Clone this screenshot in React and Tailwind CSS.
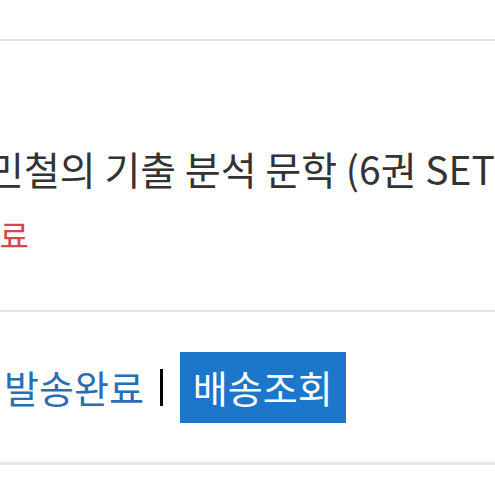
import React from 'react';

const FONT = { fontFamily: '"Noto Sans CJK KR", "Noto Sans", sans-serif' };

function OrderItem() {
  return (
    <div className="flex flex-col">
      <div className="mt-[108px] whitespace-nowrap -ml-[12px] text-[39px] leading-none text-[#333333]">
        민철의 기출 분석 문학 (6권 SET)
      </div>
      <div className="mt-[30px] whitespace-nowrap -ml-[30px] text-[32px] leading-none text-[#d8434f]">
        완료
      </div>
    </div>
  );
}

function DeliveryRow() {
  return (
    <div className="flex items-center h-[150px] pl-[4px] whitespace-nowrap">
      <span className="text-[38px] leading-none text-[#2b6db3]">발송완료</span>
      <span className="ml-[16px] w-[3px] h-[37px] bg-black" />
      <button className="ml-[17px] h-[71px] px-[13px] bg-[#1c76c9] text-white text-[38px] leading-none">
        배송조회
      </button>
    </div>
  );
}

export default function App() {
  return (
    <div className="w-[495px] h-[495px] bg-white overflow-hidden flex flex-col" style={FONT}>
      <div className="h-[39px] shrink-0" />
      <div className="h-[2px] bg-[#e4e4e4] shrink-0" />
      <div className="h-[269px] shrink-0 overflow-hidden">
        <OrderItem />
      </div>
      <div className="h-[2px] bg-[#e4e4e4] shrink-0" />
      <DeliveryRow />
      <div className="h-[3px] bg-[#e6e6e6] shrink-0" />
    </div>
  );
}
